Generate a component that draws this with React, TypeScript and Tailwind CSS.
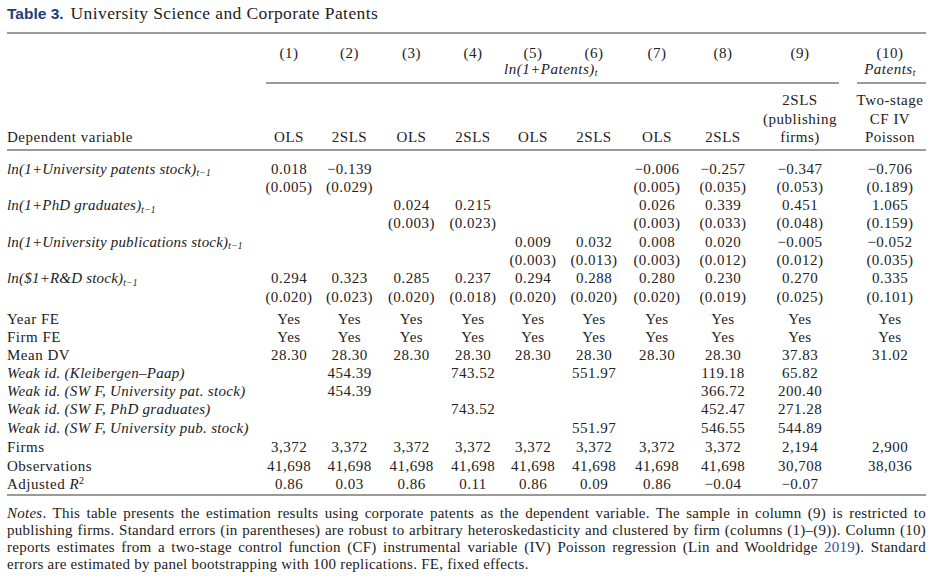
import React from "react";

const GRID =
  "grid grid-cols-[252px_60px_61px_63px_60px_60px_62px_64px_68px_86px_83px]";

type Row = { label: React.ReactNode; vals: (string | null)[]; italic?: boolean };

const M = "\u2212";

const coefRows: { label: React.ReactNode; est: (string | null)[]; se: (string | null)[] }[] = [
  {
    label: (
      <>
        ln(1+University patents stock)<sub className="text-[9.5px]">t{M}1</sub>
      </>
    ),
    est: ["0.018", `${M}0.139`, null, null, null, null, `${M}0.006`, `${M}0.257`, `${M}0.347`, `${M}0.706`],
    se: ["(0.005)", "(0.029)", null, null, null, null, "(0.005)", "(0.035)", "(0.053)", "(0.189)"],
  },
  {
    label: (
      <>
        ln(1+PhD graduates)<sub className="text-[9.5px]">t{M}1</sub>
      </>
    ),
    est: [null, null, "0.024", "0.215", null, null, "0.026", "0.339", "0.451", "1.065"],
    se: [null, null, "(0.003)", "(0.023)", null, null, "(0.003)", "(0.033)", "(0.048)", "(0.159)"],
  },
  {
    label: (
      <>
        ln(1+University publications stock)<sub className="text-[9.5px]">t{M}1</sub>
      </>
    ),
    est: [null, null, null, null, "0.009", "0.032", "0.008", "0.020", `${M}0.005`, `${M}0.052`],
    se: [null, null, null, null, "(0.003)", "(0.013)", "(0.003)", "(0.012)", "(0.012)", "(0.035)"],
  },
  {
    label: (
      <>
        ln($1+R&amp;D stock)<sub className="text-[9.5px]">t{M}1</sub>
      </>
    ),
    est: ["0.294", "0.323", "0.285", "0.237", "0.294", "0.288", "0.280", "0.230", "0.270", "0.335"],
    se: ["(0.020)", "(0.023)", "(0.020)", "(0.018)", "(0.020)", "(0.020)", "(0.020)", "(0.019)", "(0.025)", "(0.101)"],
  },
];

const midRows: Row[] = [
  { label: "Year FE", vals: Array(10).fill("Yes") },
  { label: "Firm FE", vals: Array(10).fill("Yes") },
  { label: "Mean DV", vals: [...Array(8).fill("28.30"), "37.83", "31.02"] },
  {
    label: "Weak id. (Kleibergen\u2013Paap)",
    italic: true,
    vals: [null, "454.39", null, "743.52", null, "551.97", null, "119.18", "65.82", null],
  },
  {
    label: "Weak id. (SW F, University pat. stock)",
    italic: true,
    vals: [null, "454.39", null, null, null, null, null, "366.72", "200.40", null],
  },
  {
    label: "Weak id. (SW F, PhD graduates)",
    italic: true,
    vals: [null, null, null, "743.52", null, null, null, "452.47", "271.28", null],
  },
  {
    label: "Weak id. (SW F, University pub. stock)",
    italic: true,
    vals: [null, null, null, null, null, "551.97", null, "546.55", "544.89", null],
  },
];

const botRows: Row[] = [
  { label: "Firms", vals: [...Array(8).fill("3,372"), "2,194", "2,900"] },
  { label: "Observations", vals: [...Array(8).fill("41,698"), "30,708", "38,036"] },
  {
    label: (
      <>
        Adjusted <i>R</i>
        <sup className="text-[10px]">2</sup>
      </>
    ),
    vals: ["0.86", "0.03", "0.86", "0.11", "0.86", "0.09", "0.86", `${M}0.04`, `${M}0.07`, null],
  },
];

function Cells({ vals }: { vals: (string | null)[] }) {
  return (
    <>
      {vals.map((v, i) => (
        <div key={i} className={i === 9 ? "text-center pl-[11px]" : "text-center"}>
          {v ?? ""}
        </div>
      ))}
    </>
  );
}

function Line({ label, vals, italic }: Row) {
  return (
    <div className={`${GRID} h-[18.2px] leading-[18.2px] whitespace-nowrap`}>
      <div className={italic ? "italic tracking-[0.3px]" : ""}>{label}</div>
      <Cells vals={vals} />
    </div>
  );
}

export default function App() {
  return (
    <div className="w-[933px] h-[583px] bg-white px-[7px] pt-[3px] text-[#222] overflow-hidden font-['Liberation_Serif',serif] text-[15px] tracking-[0.5px]">
      {/* Title */}
      <div className="h-[20px] leading-[20px] whitespace-nowrap tracking-normal">
        <span className="font-['Liberation_Sans',Arial,sans-serif] font-bold text-[15.5px] text-[#1d3d7a]">
          Table 3.
        </span>
        <span className="text-[17.5px] tracking-[0.4px] ml-[7px]">University Science and Corporate Patents</span>
      </div>

      {/* top rule */}
      <div className="mt-[9px] h-[2px] bg-[#9a9a9a]" />

      {/* header block 1 */}
      <div className={`${GRID} pt-[10.7px] leading-[16px] whitespace-nowrap`}>
        <div />
        {["(1)", "(2)", "(3)", "(4)", "(5)", "(6)", "(7)", "(8)", "(9)", "(10)"].map((t, i) => (
          <div key={i} className={i === 9 ? "text-center pl-[11px]" : "text-center"}>
            {t}
          </div>
        ))}
        <div />
        <div className="col-span-9 text-center italic">
          ln(1+Patents)<sub className="text-[9.5px]">t</sub>
        </div>
        <div className="text-center pl-[11px] italic">
          Patents<sub className="text-[9.5px]">t</sub>
        </div>
      </div>
      <div className={`${GRID} mt-[5.5px]`}>
        <div />
        <div className="col-span-9 ml-[7px] mr-[4px] h-[1.6px] bg-[#9a9a9a]" />
        <div className="ml-[14px] h-[1.6px] bg-[#9a9a9a]" />
      </div>

      {/* header block 2 */}
      <div className={`${GRID} pt-[7.6px] leading-[18.3px] whitespace-nowrap`}>
        <div className="self-end">Dependent variable</div>
        {["OLS", "2SLS", "OLS", "2SLS", "OLS", "2SLS", "OLS", "2SLS"].map((t, i) => (
          <div key={i} className="self-end text-center">
            {t}
          </div>
        ))}
        <div className="flex flex-col items-center">
          <span>2SLS</span>
          <span>(publishing</span>
          <span>firms)</span>
        </div>
        <div className="flex flex-col items-center pl-[11px]">
          <span>Two-stage</span>
          <span>CF IV</span>
          <span>Poisson</span>
        </div>
      </div>
      <div className="mt-[3.1px] h-[2px] bg-[#9a9a9a]" />

      {/* coefficient rows */}
      <div className="pt-[8.2px]">
        {coefRows.map((r, i) => (
          <React.Fragment key={i}>
            <div className={`${GRID} h-[18.3px] leading-[18.3px] whitespace-nowrap`}>
              <div className="italic tracking-[0.2px]">{r.label}</div>
              <Cells vals={r.est} />
            </div>
            <div className={`${GRID} h-[18.3px] leading-[18.3px] whitespace-nowrap`}>
              <div />
              <Cells vals={r.se} />
            </div>
          </React.Fragment>
        ))}
      </div>

      <div className="mt-[3.6px]">
        {midRows.map((r, i) => (
          <Line key={i} {...r} />
        ))}
      </div>
      <div className="mt-[1.6px]">
        {botRows.map((r, i) => (
          <Line key={i} {...r} />
        ))}
      </div>

      <div className="mt-[1.5px] h-[2px] bg-[#9a9a9a]" />

      {/* notes */}
      <div className="pt-[9px] leading-[16.7px] tracking-[0.25px] text-[15px]">
        <div className="text-justify [text-align-last:justify] whitespace-nowrap">
          <i>Notes</i>. This table presents the estimation results using corporate patents as the dependent variable. The sample in column (9) is restricted to
        </div>
        <div className="text-justify [text-align-last:justify] whitespace-nowrap">
          publishing firms. Standard errors (in parentheses) are robust to arbitrary heteroskedasticity and clustered by firm (columns (1){"\u2013"}(9)). Column (10)
        </div>
        <div className="text-justify [text-align-last:justify] whitespace-nowrap">
          reports estimates from a two-stage control function (CF) instrumental variable (IV) Poisson regression (Lin and Wooldridge{" "}
          <span className="text-[#2b52a0]">2019</span>). Standard
        </div>
        <div className="whitespace-nowrap">errors are estimated by panel bootstrapping with 100 replications. FE, fixed effects.</div>
      </div>
    </div>
  );
}
